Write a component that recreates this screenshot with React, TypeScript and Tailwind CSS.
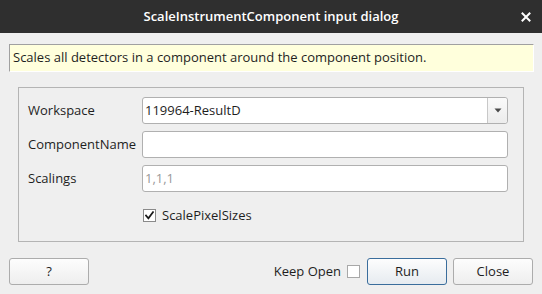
function Check() {
  return (
    <svg width="9" height="9" viewBox="0 0 9 9" className="block">
      <path d="M1 4.6 L3.4 7.4 L8 1.2" fill="none" stroke="#1a1a1a" strokeWidth="1.8" strokeLinecap="square" strokeLinejoin="miter" />
    </svg>
  );
}

function Button({ label, primary }: { label: string; primary?: boolean }) {
  return (
    <button
      className={
        primary
          ? "h-[27px] w-[80px] rounded-[3px] border border-[#3a6d9c] bg-gradient-to-b from-[#fdfdfd] to-[#e6ebf0] text-[13px] text-[#1e1e1e] flex items-center justify-center"
          : "h-[27px] w-[80px] rounded-[3px] border border-[#acacac] bg-gradient-to-b from-[#fdfdfd] to-[#eeeeee] text-[13px] text-[#1e1e1e] flex items-center justify-center"
      }
    >
      {label}
    </button>
  );
}

export default function App() {
  return (
    <div className="w-[542px] h-[294px] bg-[#efefef] flex flex-col font-['Open_Sans',sans-serif] text-[#1e1e1e] overflow-hidden">
      <div className="relative h-[33px] shrink-0 bg-[#2f2f2f] flex items-center justify-center">
        <span className="text-[13px] font-semibold text-white">ScaleInstrumentComponent input dialog</span>
        <svg width="10" height="10" viewBox="0 0 10 10" className="absolute right-[11px] top-[12px] block">
          <path d="M1.5 1.5 L8.5 8.5 M8.5 1.5 L1.5 8.5" stroke="#ffffff" strokeWidth="2" strokeLinecap="square" />
        </svg>
      </div>

      <div className="mt-[11px] ml-[9px] w-[525px] h-[28px] shrink-0 bg-[#ffffdc] border-t border-l border-[#a0a0a0] border-r border-b border-r-white border-b-white flex items-center pl-[3px]">
        <span className="text-[13px]">Scales all detectors in a component around the component position.</span>
      </div>

      <div className="mt-[15px] ml-[18px] w-[506px] h-[155px] shrink-0 border border-[#b4b4b4] flex flex-col pt-[9px] pl-[9px] pr-[15px] gap-[7px]">
        <div className="flex items-center h-[27px]">
          <span className="w-[114px] text-[13px]">Workspace</span>
          <div className="flex-1 h-[27px] bg-white border border-[#b0b0b0] rounded-[3px] flex items-stretch">
            <span className="flex-1 flex items-center pl-[2px] text-[13px]">119964-ResultD</span>
            <div className="w-[20px] border-l border-[#c8c8c8] bg-gradient-to-b from-[#fafafa] to-[#ececec] rounded-r-[3px] flex items-center justify-center">
              <svg width="8" height="5" viewBox="0 0 8 5" className="block">
                <path d="M0.5 0.5 L7.5 0.5 L4 4.5 Z" fill="#4a4a4a" />
              </svg>
            </div>
          </div>
        </div>
        <div className="flex items-center h-[27px]">
          <span className="w-[114px] text-[13px]">ComponentName</span>
          <div className="flex-1 h-[27px] bg-white border border-[#b0b0b0] rounded-[3px]" />
        </div>
        <div className="flex items-center h-[27px]">
          <span className="w-[114px] text-[13px]">Scalings</span>
          <div className="flex-1 h-[27px] bg-white border border-[#b0b0b0] rounded-[3px] flex items-center pl-[2px]">
            <span className="text-[13px] text-[#9a9a9a]">1,1,1</span>
          </div>
        </div>
        <div className="flex items-center mt-[7px] pl-[115px] gap-[6px]">
          <div className="w-[13px] h-[13px] bg-white border border-[#8a8a8a] flex items-center justify-center">
            <Check />
          </div>
          <span className="text-[13px]">ScalePixelSizes</span>
        </div>
      </div>

      <div className="mt-[16px] flex items-center pl-[9px] pr-[9px]">
        <Button label="?" />
        <div className="flex-1" />
        <span className="text-[13px] mr-[6px]">Keep Open</span>
        <div className="w-[13px] h-[13px] bg-white border border-[#a8a8a8] mr-[7px]" />
        <Button label="Run" primary />
        <div className="w-[6px]" />
        <Button label="Close" />
      </div>
    </div>
  );
}
